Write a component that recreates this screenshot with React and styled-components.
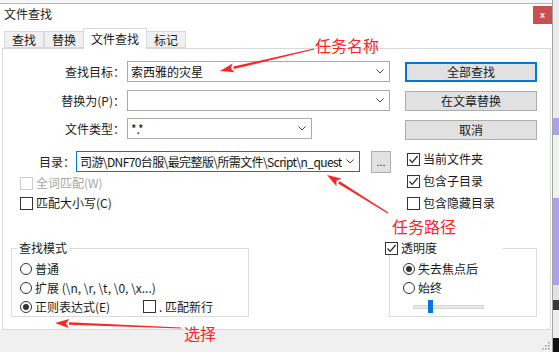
import React from 'react';
import styled, { createGlobalStyle } from 'styled-components';

const GlobalStyle = createGlobalStyle`
  html, body {
    margin: 0;
    padding: 0;
    background: #ffffff;
  }
  body {
    font-family: "Noto Sans CJK SC", "Noto Sans", sans-serif;
    font-size: 12px;
    line-height: 14px;
    color: #1a1a1a;
  }
`;

const RED = '#ff2424';

function Chevron() {
    return (
        <svg width="8" height="5" viewBox="0 0 8 5">
            <polyline points="0.5,0.5 4,4 7.5,0.5" fill="none" stroke="#444" strokeWidth="1" />
        </svg>
    );
}

function Tick() {
    return (
        <svg width="11" height="11" viewBox="0 0 11 11">
            <polyline points="1.5,5.5 4.2,8.3 9.6,2" fill="none" stroke="#222" strokeWidth="1.2" />
        </svg>
    );
}

function Check({ checked, disabled, label, ...rest }) {
    return (
        <CheckItem $disabled={disabled} {...rest}>
            <CheckBox $disabled={disabled}>{checked && <Tick />}</CheckBox>
            <span>{label}</span>
        </CheckItem>
    );
}

function Radio({ on, label, ...rest }) {
    return (
        <RadioItem {...rest}>
            <RadioDot $on={on} />
            <span>{label}</span>
        </RadioItem>
    );
}

function Arrow({ from, to }) {
    const [x1, y1] = from;
    const [x2, y2] = to;
    const len = Math.hypot(x2 - x1, y2 - y1);
    const ux = (x2 - x1) / len;
    const uy = (y2 - y1) / len;
    const px = -uy;
    const py = ux;
    const head = 14;
    const hw = 4.5;
    const bx = x2 - ux * head;
    const by = y2 - uy * head;
    const shaft = [
        [x1 + px * 0.6, y1 + py * 0.6],
        [bx + px * 1.3, by + py * 1.3],
        [bx - px * 1.3, by - py * 1.3],
        [x1 - px * 0.6, y1 - py * 0.6],
    ];
    const tip = [
        [x2, y2],
        [bx + px * hw, by + py * hw],
        [bx + ux * 3, by + uy * 3],
        [bx - px * hw, by - py * hw],
    ];
    const pts = (arr) => arr.map((p) => p.join(',')).join(' ');
    return (
        <g fill={RED}>
            <polygon points={pts(shaft)} />
            <polygon points={pts(tip)} />
        </g>
    );
}

function App() {
    return (
        <Screen>
            <GlobalStyle />
            <Window>
                <TopEdge />
                <TitleBar>
                    <Title>文件查找</Title>
                    <CloseButton>x</CloseButton>
                </TitleBar>

                <TabStrip>
                    <Tab>查找</Tab>
                    <Tab>替换</Tab>
                    <Tab $active>文件查找</Tab>
                    <Tab>标记</Tab>
                </TabStrip>

                <Panel>
                    <TopSection>
                        <FormColumn>
                            <FieldRow $mt={0}>
                                <FieldLabel $w={122}>查找目标：</FieldLabel>
                                <Combo $w={263} $ml={2}>
                                    <ComboText>索西雅的灾星</ComboText>
                                    <Chevron />
                                </Combo>
                            </FieldRow>
                            <FieldRow $mt={8}>
                                <FieldLabel $w={122}>替换为(P)：</FieldLabel>
                                <Combo $w={263} $ml={2}>
                                    <ComboText />
                                    <Chevron />
                                </Combo>
                            </FieldRow>
                            <FieldRow $mt={7}>
                                <FieldLabel $w={122}>文件类型：</FieldLabel>
                                <Combo $w={185} $ml={2}>
                                    <ComboText>*.*</ComboText>
                                    <Chevron />
                                </Combo>
                            </FieldRow>
                            <FieldRow $mt={12}>
                                <FieldLabel $w={72}>目录：</FieldLabel>
                                <Combo $w={284} $ml={1} $focused>
                                    <ComboText $tight>{'司游\\DNF70台服\\最完整版\\所需文件\\Script\\n_quest'}</ComboText>
                                    <Chevron />
                                </Combo>
                                <BrowseButton>...</BrowseButton>
                            </FieldRow>
                            <Check $h={20} $pl={17} $mt={1} disabled label="全词匹配(W)" />
                            <Check $h={20} $pl={17} label="匹配大小写(C)" />
                        </FormColumn>

                        <ActionColumn>
                            <PushButton $default $mt={0}>全部查找</PushButton>
                            <PushButton $mt={9}>在文章替换</PushButton>
                            <PushButton $mt={9}>取消</PushButton>
                            <Check $h={22} $pl={2} $mt={8} checked label="当前文件夹" />
                            <Check $h={22} $pl={2} checked label="包含子目录" />
                            <Check $h={22} $pl={2} label="包含隐藏目录" />
                        </ActionColumn>
                    </TopSection>

                    <BottomSection>
                        <GroupBox $ml={8} $w={238} $pl={8}>
                            <Legend $ml={-3}>查找模式</Legend>
                            <Radio label="普通" />
                            <Radio label="扩展 (\n, \r, \t, \0, \x...)" />
                            <OptionRow>
                                <Radio on label="正则表达式(E)" $w={123} />
                                <Check $h={19} $pl={0} label=". 匹配新行" />
                            </OptionRow>
                        </GroupBox>

                        <GroupBox $ml={140} $w={148} $pl={13}>
                            <Legend $ml={-20} $w={120}>
                                <CheckBox><Tick /></CheckBox>
                                <span>透明度</span>
                            </Legend>
                            <Radio on label="失去焦点后" />
                            <Radio label="始终" />
                            <SliderRow>
                                <Track>
                                    <Thumb />
                                </Track>
                            </SliderRow>
                        </GroupBox>
                    </BottomSection>
                </Panel>

                <StatusBar>
                    <svg width="10" height="10" viewBox="0 0 10 10">
                        {[[8, 2], [8, 5], [5, 5], [8, 8], [5, 8], [2, 8]].map(([x, y]) => (
                            <rect key={`${x}-${y}`} x={x} y={y} width="1.5" height="1.5" fill="#9a9a9a" />
                        ))}
                    </svg>
                </StatusBar>
            </Window>

            <SideStrip />

            <Annotations>
                <svg width="559" height="352" viewBox="0 0 559 352">
                    <Arrow from={[314, 49]} to={[220, 71]} />
                    <Arrow from={[388, 213]} to={[327, 175]} />
                    <Arrow from={[181, 328]} to={[55, 323]} />
                </svg>
                <Note $x={315} $y={37}>任务名称</Note>
                <Note $x={392} $y={218}>任务路径</Note>
                <Note $x={184} $y={325}>选择</Note>
            </Annotations>
        </Screen>
    );
}

const Screen = styled.div`
    position: relative;
    display: flex;
    width: 559px;
    height: 352px;
    overflow: hidden;
`;

const Window = styled.div`
    display: flex;
    flex-direction: column;
    width: 553px;
    height: 352px;
    box-sizing: border-box;
    border-right: 1px solid #a4a4a4;
    background: #ffffff;
`;

const TopEdge = styled.div`
    height: 3px;
    background: #f7f7f7;
`;

const TitleBar = styled.div`
    height: 25px;
    box-sizing: border-box;
    border-top: 1px solid #8cc2e4;
    display: flex;
    justify-content: space-between;
    align-items: flex-start;
    padding: 2px 0 0 4px;
`;

const Title = styled.div`
    line-height: 16px;
    color: #222;
`;

const CloseButton = styled.div`
    width: 19px;
    height: 18px;
    background: #c75050;
    color: #ffffff;
    font-family: "Liberation Sans", sans-serif;
    font-size: 9px;
    font-weight: bold;
    display: flex;
    align-items: center;
    justify-content: center;
`;

const TabStrip = styled.div`
    height: 20px;
    box-sizing: border-box;
    display: flex;
    align-items: flex-end;
    padding-left: 4px;
`;

const Tab = styled.div`
    position: relative;
    z-index: ${(p) => (p.$active ? 2 : 1)};
    height: ${(p) => (p.$active ? 21 : 17)}px;
    margin-bottom: ${(p) => (p.$active ? -1 : 0)}px;
    box-sizing: border-box;
    padding: 0 7px;
    border: 1px solid #d9d9d9;
    border-bottom: ${(p) => (p.$active ? 'none' : '1px solid #d9d9d9')};
    margin-left: ${(p) => (p.$active ? -1 : 0)}px;
    margin-right: ${(p) => (p.$active ? -1 : 0)}px;
    background: ${(p) => (p.$active ? '#ffffff' : '#f0f0f0')};
    display: flex;
    align-items: center;
    color: #1a1a1a;
`;

const Panel = styled.div`
    height: 282px;
    margin: 0 1px 0 2px;
    box-sizing: border-box;
    border: 1px solid #d9d9d9;
    padding-top: 12px;
    background: #ffffff;
`;

const TopSection = styled.div`
    display: flex;
    align-items: flex-start;
`;

const FormColumn = styled.div`
    width: 390px;
    display: flex;
    flex-direction: column;
`;

const FieldRow = styled.div`
    display: flex;
    align-items: center;
    height: 21px;
    margin-top: ${(p) => p.$mt}px;
`;

const FieldLabel = styled.div`
    width: ${(p) => p.$w}px;
    flex-shrink: 0;
    text-align: right;
    white-space: nowrap;
    color: #222;
`;

const Combo = styled.div`
    width: ${(p) => p.$w}px;
    height: 21px;
    margin-left: ${(p) => p.$ml}px;
    box-sizing: border-box;
    flex-shrink: 0;
    border: 1px solid ${(p) => (p.$focused ? '#0078d7' : '#a9a9a9')};
    background: #ffffff;
    display: flex;
    align-items: center;
    gap: 4px;
    padding: 0 5px 0 3px;
`;

const ComboText = styled.div`
    flex: 1;
    height: 19px;
    line-height: 19px;
    overflow: hidden;
    white-space: nowrap;
    letter-spacing: ${(p) => (p.$tight ? '-0.6px' : 'normal')};
    color: #111;
`;

const BrowseButton = styled.div`
    width: 20px;
    height: 22px;
    margin-left: 11px;
    box-sizing: border-box;
    border: 1px solid #adadad;
    background: #e1e1e1;
    display: flex;
    align-items: center;
    justify-content: center;
    font-family: "Liberation Sans", sans-serif;
    font-size: 11px;
    color: #222;
`;

const ActionColumn = styled.div`
    width: 132px;
    margin-left: 12px;
    padding-top: 1px;
    display: flex;
    flex-direction: column;
`;

const PushButton = styled.div`
    height: 20px;
    margin-top: ${(p) => p.$mt}px;
    box-sizing: border-box;
    border: 1px solid ${(p) => (p.$default ? '#0078d7' : '#adadad')};
    box-shadow: ${(p) => (p.$default ? 'inset 0 0 0 1px #0078d7' : 'none')};
    background: #e1e1e1;
    display: flex;
    align-items: center;
    justify-content: center;
    color: #1a1a1a;
`;

const CheckItem = styled.div`
    display: flex;
    align-items: center;
    gap: 3px;
    height: ${(p) => p.$h}px;
    padding-left: ${(p) => p.$pl}px;
    margin-top: ${(p) => p.$mt || 0}px;
    color: ${(p) => (p.$disabled ? '#a6a6a6' : '#1a1a1a')};
    white-space: nowrap;
`;

const CheckBox = styled.span`
    width: 13px;
    height: 13px;
    box-sizing: border-box;
    flex-shrink: 0;
    border: 1px solid ${(p) => (p.$disabled ? '#cccccc' : '#333333')};
    background: #ffffff;
    display: inline-flex;
    align-items: center;
    justify-content: center;
`;

const BottomSection = styled.div`
    display: flex;
    align-items: flex-start;
    margin-top: 27px;
`;

const GroupBox = styled.fieldset`
    margin: 0 0 0 ${(p) => p.$ml}px;
    width: ${(p) => p.$w}px;
    min-width: 0;
    box-sizing: border-box;
    border: 1px solid #dcdcdc;
    padding: 4px 0 0 ${(p) => p.$pl}px;
`;

const Legend = styled.legend`
    display: flex;
    align-items: center;
    gap: 3px;
    height: 14px;
    line-height: 14px;
    padding: 0 2px;
    margin-left: ${(p) => p.$ml}px;
    width: ${(p) => (p.$w ? `${p.$w}px` : 'auto')};
    box-sizing: border-box;
    background: #ffffff;
    color: #222;
`;

const RadioItem = styled.div`
    display: flex;
    align-items: center;
    gap: 3px;
    height: 19px;
    width: ${(p) => (p.$w ? `${p.$w}px` : 'auto')};
    flex-shrink: 0;
    white-space: nowrap;
    color: #1a1a1a;
`;

const RadioDot = styled.span`
    width: 12px;
    height: 12px;
    box-sizing: border-box;
    flex-shrink: 0;
    border: 1px solid #333333;
    border-radius: 50%;
    display: inline-flex;
    align-items: center;
    justify-content: center;

    &::after {
        content: '';
        width: 6px;
        height: 6px;
        border-radius: 50%;
        background: ${(p) => (p.$on ? '#333333' : 'transparent')};
    }
`;

const OptionRow = styled.div`
    display: flex;
    align-items: center;
`;

const SliderRow = styled.div`
    height: 19px;
    display: flex;
    align-items: center;
    padding-left: 10px;
`;

const Track = styled.div`
    position: relative;
    width: 71px;
    height: 4px;
    box-sizing: border-box;
    border: 1px solid #d6d6d6;
    background: #e7eaea;
`;

const Thumb = styled.div`
    position: absolute;
    left: 14px;
    top: -6px;
    width: 5px;
    height: 13px;
    background: #0078d7;
`;

const StatusBar = styled.div`
    height: 22px;
    background: #f0f0f0;
    display: flex;
    justify-content: flex-end;
    align-items: flex-end;
    padding: 0 2px 2px 0;
    box-sizing: border-box;
`;

const SideStrip = styled.div`
    width: 6px;
    height: 352px;
    background: linear-gradient(
        to bottom,
        #ececec 0 118px,
        #a9a3e8 118px 135px,
        #eef3ee 135px 198px,
        #a9a3e8 198px 285px,
        #e2e2e2 285px 300px,
        #3a3a3a 300px 310px,
        #ededed 310px 338px,
        #111111 338px
    );
`;

const Annotations = styled.div`
    position: absolute;
    inset: 0;
    pointer-events: none;

    svg {
        position: absolute;
        left: 0;
        top: 0;
    }
`;

const Note = styled.span`
    position: absolute;
    left: ${(p) => p.$x}px;
    top: ${(p) => p.$y}px;
    font-size: 16px;
    line-height: 17px;
    color: ${RED};
    white-space: nowrap;
`;

export default App;
